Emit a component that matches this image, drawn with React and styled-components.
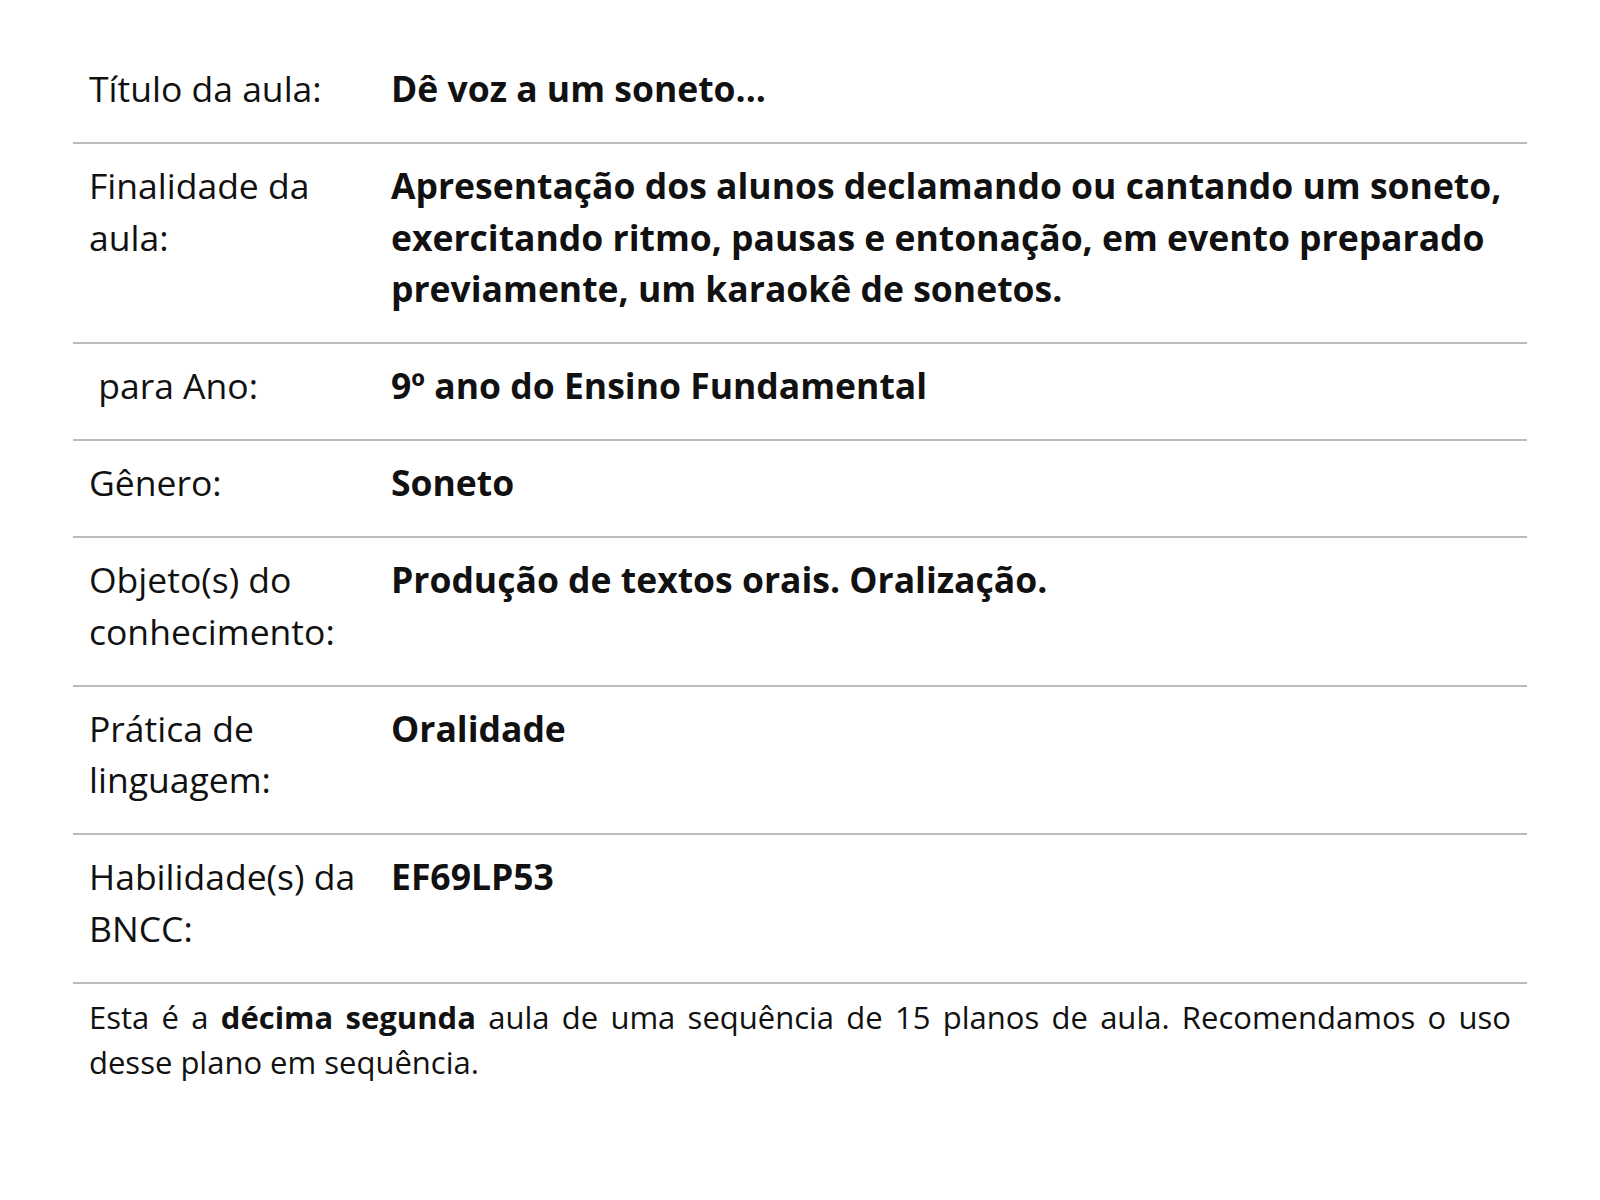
import React from "react";
import styled, { createGlobalStyle } from "styled-components";

const rows = [
  { label: "Título da aula:", value: "Dê voz a um soneto..." },
  {
    label: "Finalidade da aula:",
    value:
      "Apresentação dos alunos declamando ou cantando um soneto, exercitando ritmo, pausas e entonação, em evento preparado previamente, um karaokê de sonetos.",
  },
  { label: "\u00a0para Ano:", value: "9º ano do Ensino Fundamental" },
  { label: "Gênero:", value: "Soneto" },
  {
    label: "Objeto(s) do conhecimento:",
    value: "Produção de textos orais. Oralização.",
  },
  { label: "Prática de linguagem:", value: "Oralidade" },
  { label: "Habilidade(s) da BNCC:", value: "EF69LP53" },
];

const App = () => {
  return (
    <Page>
      <GlobalStyle />
      <Table>
        {rows.map((row) => (
          <Row key={row.label}>
            <Label>{row.label}</Label>
            <Value>{row.value}</Value>
          </Row>
        ))}
      </Table>
      <Note>
        Esta é a <b>décima segunda</b> aula de uma sequência de 15 planos de
        aula. Recomendamos o uso desse plano em sequência.
      </Note>
    </Page>
  );
};

export default App;

const GlobalStyle = createGlobalStyle`
  body {
    margin: 0;
    background: #fff;
    font-family: "Open Sans", "Noto Sans", sans-serif;
    color: #111;
  }
`;

const Page = styled.div`
  width: 1454px;
  margin-left: 73px;
  padding-top: 47px;
`;

const Table = styled.div`
  display: flex;
  flex-direction: column;
`;

const Row = styled.div`
  display: grid;
  grid-template-columns: 318px 1fr;
  padding: 16px 0 27.2px;
  border-bottom: 2px solid #bcbcbc;
  font-size: 35.5px;
  line-height: 51.7px;
`;

const Label = styled.div`
  padding: 0 16px;
  font-weight: 400;
`;

const Value = styled.div`
  padding: 0 16px 0 0;
  font-weight: 700;
`;

const Note = styled.p`
  margin: 0;
  padding: 11px 16px 0;
  font-size: 31px;
  line-height: 45px;
  text-align: justify;
`;
